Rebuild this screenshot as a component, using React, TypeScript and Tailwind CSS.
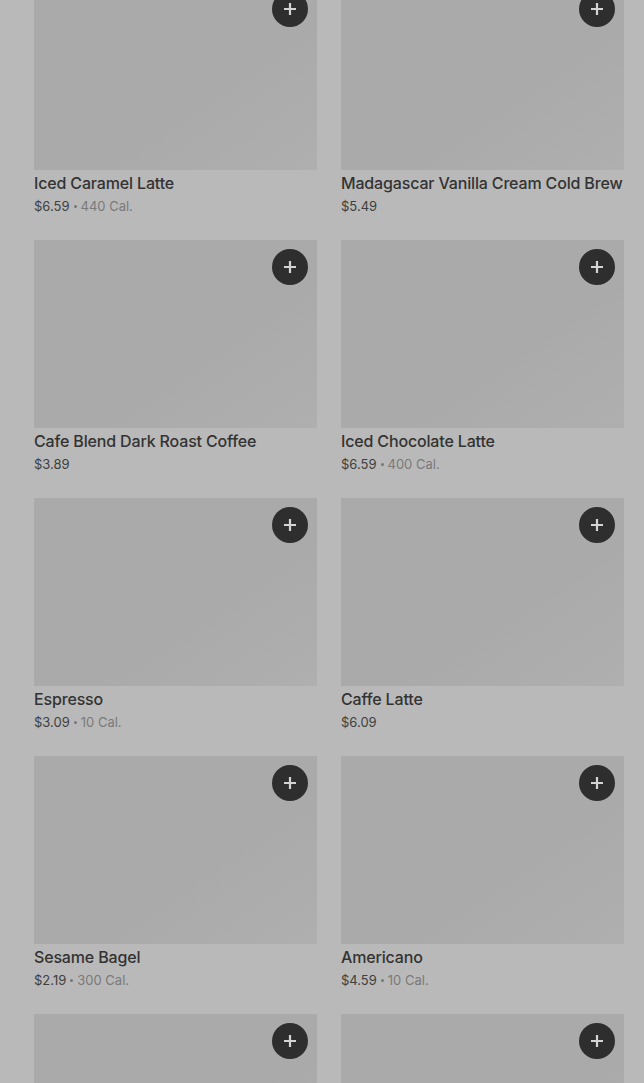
const items = [
  { name: "Iced Caramel Latte", price: "$6.59", cal: "440 Cal." },
  { name: "Madagascar Vanilla Cream Cold Brew", price: "$5.49" },
  { name: "Cafe Blend Dark Roast Coffee", price: "$3.89" },
  { name: "Iced Chocolate Latte", price: "$6.59", cal: "400 Cal." },
  { name: "Espresso", price: "$3.09", cal: "10 Cal." },
  { name: "Caffe Latte", price: "$6.09" },
  { name: "Sesame Bagel", price: "$2.19", cal: "300 Cal." },
  { name: "Americano", price: "$4.59", cal: "10 Cal." },
  { name: "Caramel Macchiato", price: "$5.79" },
  { name: "Cold Brew", price: "$4.99" },
];

const PlusButton = () => (
  <button className="absolute top-[9px] right-[9px] w-9 h-9 rounded-full bg-[#2e2e2e] flex items-center justify-center">
    <svg width="14" height="14" viewBox="0 0 14 14">
      <path d="M7 1v12M1 7h12" stroke="#d4d4d4" strokeWidth="2.2" />
    </svg>
  </button>
);

const Card = ({ item }: { item: (typeof items)[number] }) => (
  <div>
    <div className="relative h-[188px] bg-gradient-to-br from-[#aaaaaa] from-60% to-[#afafaf]">
      <PlusButton />
    </div>
    <p className="mt-[3px] text-base leading-5 font-medium tracking-[-0.01em] text-[#333333] whitespace-nowrap">
      {item.name}
    </p>
    <p className="mt-[3px] text-[13px] leading-5 text-[#3f3f3f] flex items-center">
      {item.price}
      {item.cal && (
        <>
          <span className="mx-[4px] w-[3px] h-[3px] rounded-full bg-[#777777]" />
          <span className="text-[#7a7a7a]">{item.cal}</span>
        </>
      )}
    </p>
  </div>
);

export default function App() {
  return (
    <div
      className="h-[1083px] overflow-hidden bg-[#b9b9b9]"
      style={{ fontFamily: "Inter, 'Liberation Sans', sans-serif" }}
    >
      <div className="-mt-[18px] pl-[34px] pr-[20px] grid grid-cols-2 gap-x-6 gap-y-6">
        {items.map((item) => (
          <Card key={item.name} item={item} />
        ))}
      </div>
    </div>
  );
}
